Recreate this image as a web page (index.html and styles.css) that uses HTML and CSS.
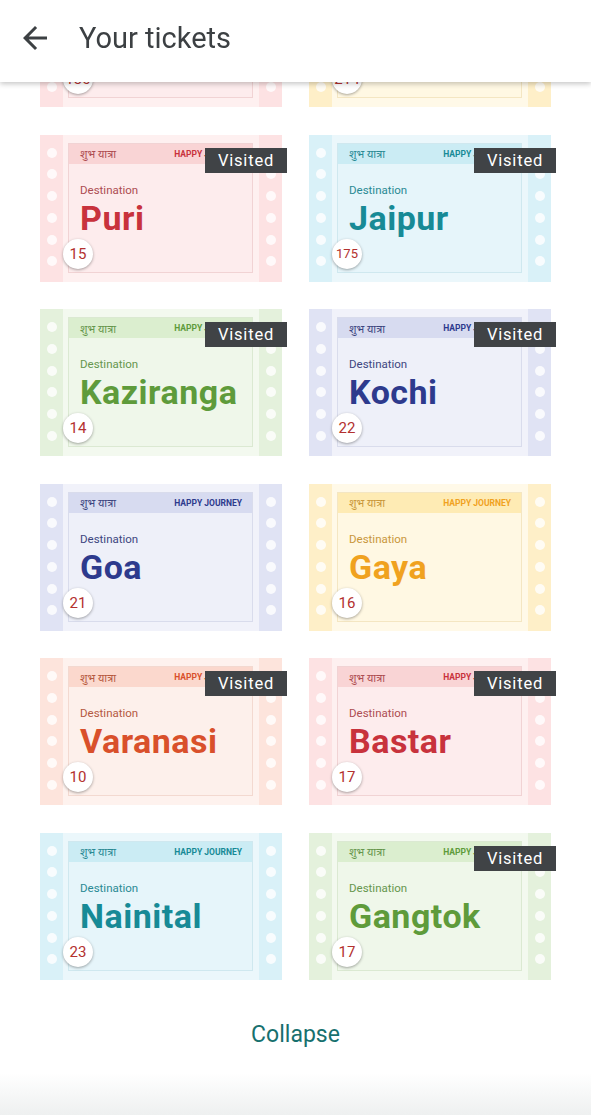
FILE: index.html
```html
<!DOCTYPE html>
<html lang="en">
<head>
    <meta charset="UTF-8">
    <meta name="viewport" content="width=device-width, initial-scale=1.0">
    <title>Your tickets</title>
    <link rel="stylesheet" href="styles.css">
</head>
<body>
    <!-- Верхняя панель -->
    <div class="topbar">
        <svg class="back" viewBox="0 0 24 24" width="36" height="36"><path d="M20 11H7.83l5.59-5.59L12 4l-8 8 8 8 1.41-1.41L7.83 13H20v-2z"/></svg>
        <h1>Your tickets</h1>
    </div>

    <div class="tickets">
        <div class="ticket red">
            <div class="strip"><span></span><span></span><span></span><span></span><span></span><span></span></div>
            <div class="mid"><div class="panel">
                <div class="band"><span class="hindi">शुभ यात्रा</span><span class="hj">HAPPY JOURNEY</span></div>
                <div class="dest">Destination</div><div class="city">Agra</div>
            </div></div>
            <div class="strip"><span></span><span></span><span></span><span></span><span></span><span></span></div>
            <div class="num">130</div>
        </div>
        <div class="ticket yellow">
            <div class="strip"><span></span><span></span><span></span><span></span><span></span><span></span></div>
            <div class="mid"><div class="panel">
                <div class="band"><span class="hindi">शुभ यात्रा</span><span class="hj">HAPPY JOURNEY</span></div>
                <div class="dest">Destination</div><div class="city">Hampi</div>
            </div></div>
            <div class="strip"><span></span><span></span><span></span><span></span><span></span><span></span></div>
            <div class="num">214</div>
        </div>

        <div class="ticket red">
            <div class="strip"><span></span><span></span><span></span><span></span><span></span><span></span></div>
            <div class="mid"><div class="panel">
                <div class="band"><span class="hindi">शुभ यात्रा</span><span class="hj">HAPPY JOURNEY</span></div>
                <div class="dest">Destination</div><div class="city">Puri</div>
            </div></div>
            <div class="strip"><span></span><span></span><span></span><span></span><span></span><span></span></div>
            <div class="num">15</div>
            <div class="visited">Visited</div>
        </div>
        <div class="ticket cyan">
            <div class="strip"><span></span><span></span><span></span><span></span><span></span><span></span></div>
            <div class="mid"><div class="panel">
                <div class="band"><span class="hindi">शुभ यात्रा</span><span class="hj">HAPPY JOURNEY</span></div>
                <div class="dest">Destination</div><div class="city">Jaipur</div>
            </div></div>
            <div class="strip"><span></span><span></span><span></span><span></span><span></span><span></span></div>
            <div class="num small">175</div>
            <div class="visited">Visited</div>
        </div>

        <div class="ticket green">
            <div class="strip"><span></span><span></span><span></span><span></span><span></span><span></span></div>
            <div class="mid"><div class="panel">
                <div class="band"><span class="hindi">शुभ यात्रा</span><span class="hj">HAPPY JOURNEY</span></div>
                <div class="dest">Destination</div><div class="city">Kaziranga</div>
            </div></div>
            <div class="strip"><span></span><span></span><span></span><span></span><span></span><span></span></div>
            <div class="num">14</div>
            <div class="visited">Visited</div>
        </div>
        <div class="ticket indigo">
            <div class="strip"><span></span><span></span><span></span><span></span><span></span><span></span></div>
            <div class="mid"><div class="panel">
                <div class="band"><span class="hindi">शुभ यात्रा</span><span class="hj">HAPPY JOURNEY</span></div>
                <div class="dest">Destination</div><div class="city">Kochi</div>
            </div></div>
            <div class="strip"><span></span><span></span><span></span><span></span><span></span><span></span></div>
            <div class="num">22</div>
            <div class="visited">Visited</div>
        </div>

        <div class="ticket indigo">
            <div class="strip"><span></span><span></span><span></span><span></span><span></span><span></span></div>
            <div class="mid"><div class="panel">
                <div class="band"><span class="hindi">शुभ यात्रा</span><span class="hj">HAPPY JOURNEY</span></div>
                <div class="dest">Destination</div><div class="city">Goa</div>
            </div></div>
            <div class="strip"><span></span><span></span><span></span><span></span><span></span><span></span></div>
            <div class="num">21</div>
        </div>
        <div class="ticket yellow">
            <div class="strip"><span></span><span></span><span></span><span></span><span></span><span></span></div>
            <div class="mid"><div class="panel">
                <div class="band"><span class="hindi">शुभ यात्रा</span><span class="hj">HAPPY JOURNEY</span></div>
                <div class="dest">Destination</div><div class="city">Gaya</div>
            </div></div>
            <div class="strip"><span></span><span></span><span></span><span></span><span></span><span></span></div>
            <div class="num">16</div>
        </div>

        <div class="ticket orange">
            <div class="strip"><span></span><span></span><span></span><span></span><span></span><span></span></div>
            <div class="mid"><div class="panel">
                <div class="band"><span class="hindi">शुभ यात्रा</span><span class="hj">HAPPY JOURNEY</span></div>
                <div class="dest">Destination</div><div class="city">Varanasi</div>
            </div></div>
            <div class="strip"><span></span><span></span><span></span><span></span><span></span><span></span></div>
            <div class="num">10</div>
            <div class="visited">Visited</div>
        </div>
        <div class="ticket red">
            <div class="strip"><span></span><span></span><span></span><span></span><span></span><span></span></div>
            <div class="mid"><div class="panel">
                <div class="band"><span class="hindi">शुभ यात्रा</span><span class="hj">HAPPY JOURNEY</span></div>
                <div class="dest">Destination</div><div class="city">Bastar</div>
            </div></div>
            <div class="strip"><span></span><span></span><span></span><span></span><span></span><span></span></div>
            <div class="num">17</div>
            <div class="visited">Visited</div>
        </div>

        <div class="ticket cyan">
            <div class="strip"><span></span><span></span><span></span><span></span><span></span><span></span></div>
            <div class="mid"><div class="panel">
                <div class="band"><span class="hindi">शुभ यात्रा</span><span class="hj">HAPPY JOURNEY</span></div>
                <div class="dest">Destination</div><div class="city">Nainital</div>
            </div></div>
            <div class="strip"><span></span><span></span><span></span><span></span><span></span><span></span></div>
            <div class="num">23</div>
        </div>
        <div class="ticket green">
            <div class="strip"><span></span><span></span><span></span><span></span><span></span><span></span></div>
            <div class="mid"><div class="panel">
                <div class="band"><span class="hindi">शुभ यात्रा</span><span class="hj">HAPPY JOURNEY</span></div>
                <div class="dest">Destination</div><div class="city">Gangtok</div>
            </div></div>
            <div class="strip"><span></span><span></span><span></span><span></span><span></span><span></span></div>
            <div class="num">17</div>
            <div class="visited">Visited</div>
        </div>
    </div>

    <button class="collapse">Collapse</button>
    <div class="fade"></div>
</body>
</html>
```

FILE: styles.css
```css
body {
    margin: 0;
    font-family: Roboto, "Noto Sans", "Noto Sans Devanagari", sans-serif;
    background: #fff;
    overflow: hidden;
}
.topbar {
    position: fixed;
    top: 0;
    left: 0;
    right: 0;
    height: 82px;
    background: #fff;
    display: flex;
    align-items: center;
    padding: 0 0 6px 17px;
    box-sizing: border-box;
    box-shadow: 0 2px 5px rgba(0, 0, 0, 0.22);
    z-index: 10;
}
.topbar .back {
    fill: #3c4043;
}
.topbar h1 {
    margin: 0 0 0 26px;
    font-size: 29px;
    font-weight: 400;
    color: #3c4043;
}
.tickets {
    display: grid;
    grid-template-columns: 242px 242px;
    column-gap: 27px;
    row-gap: 27.5px;
    padding: 0 40px;
    margin-top: -40px;
}
.ticket {
    position: relative;
    height: 147px;
    display: flex;
    background: var(--card);
}
.strip {
    width: 23px;
    background: var(--strip);
    display: flex;
    flex-direction: column;
    justify-content: space-between;
    align-items: center;
    padding: 13px 0 15px;
    box-sizing: border-box;
}
.strip span {
    width: 10px;
    height: 10px;
    border-radius: 50%;
    background: rgba(255, 255, 255, 0.8);
}
.mid {
    flex: 1;
    padding: 8px 6px 9px 5px;
}
.panel {
    height: 100%;
    box-sizing: border-box;
    background: var(--panel);
    border: 1px solid var(--border);
}
.band {
    height: 20px;
    background: var(--band);
    display: flex;
    justify-content: space-between;
    align-items: center;
    padding: 0 10px 0 11px;
}
.hindi {
    font-size: 11px;
    color: var(--sub);
}
.hj {
    font-size: 8.5px;
    font-weight: 700;
    color: var(--accent);
}
.dest {
    margin: 19px 0 0 11px;
    font-size: 11.5px;
    line-height: 14px;
    color: var(--sub);
}
.city {
    margin: 3px 0 0 11px;
    font-size: 34px;
    line-height: 36px;
    font-weight: 700;
    letter-spacing: 0.5px;
    color: var(--accent);
}
.num {
    position: absolute;
    left: 23px;
    top: 104px;
    width: 30px;
    height: 30px;
    border-radius: 50%;
    background: #fff;
    box-shadow: 0 1px 3px rgba(0, 0, 0, 0.35);
    display: flex;
    align-items: center;
    justify-content: center;
    font-size: 15px;
    color: #b3312f;
}
.num.small {
    font-size: 13px;
}
.visited {
    position: absolute;
    right: -5px;
    top: 13px;
    width: 82px;
    height: 25px;
    background: #404346;
    color: #fff;
    font-size: 16.5px;
    font-weight: 400;
    letter-spacing: 0.8px;
    display: flex;
    align-items: center;
    justify-content: center;
}
.red {
    --card: #fef0f0; --strip: #fde2e3; --panel: #fdeced; --band: #f9d4d5;
    --border: #f1d3d4; --accent: #c8323c; --sub: #ad4d52;
}
.cyan {
    --card: #ebf7fb; --strip: #d9f1f8; --panel: #e6f5fa; --band: #cbecf4;
    --border: #cfe8ef; --accent: #178a96; --sub: #2a8a94;
}
.green {
    --card: #f3f9ef; --strip: #e4f1dc; --panel: #eff7ea; --band: #dbeecf;
    --border: #dbe9d2; --accent: #5e9b3b; --sub: #66964d;
}
.indigo {
    --card: #f1f2fa; --strip: #e0e3f4; --panel: #eef0f9; --band: #d7dbf0;
    --border: #d9dcec; --accent: #2d3a8d; --sub: #3d4680;
}
.yellow {
    --card: #fff9e8; --strip: #feefc8; --panel: #fff8e3; --band: #feebb4;
    --border: #f4e6c2; --accent: #f0a21f; --sub: #c9973b;
}
.orange {
    --card: #fef2ee; --strip: #fde4dc; --panel: #fdf0eb; --band: #fbd8cd;
    --border: #f3d9d0; --accent: #d9502b; --sub: #b5593f;
}
.collapse {
    display: block;
    margin: 35px auto 0;
    height: 40px;
    padding: 0 16px;
    border: none;
    background: none;
    font-family: Roboto, sans-serif;
    font-size: 23px;
    font-weight: 400;
    color: #17706e;
}
.fade {
    height: 60px;
    background: linear-gradient(to bottom, rgba(238, 240, 240, 0) 30%, #eef0f0 100%);
}
```
